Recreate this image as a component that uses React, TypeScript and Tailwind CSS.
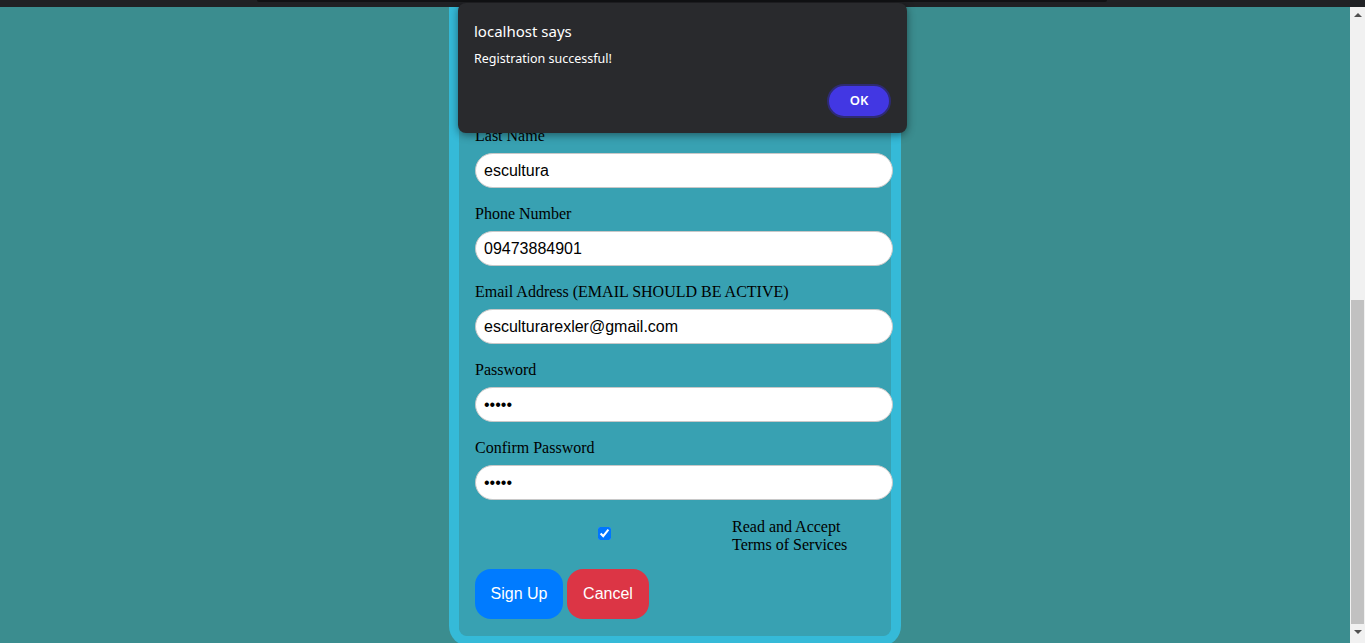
import { useState } from "react";

const fields = [
  { label: "Last Name", value: "escultura", type: "text" },
  { label: "Phone Number", value: "09473884901", type: "text" },
  { label: "Email Address (EMAIL SHOULD BE ACTIVE)", value: "esculturarexler@gmail.com", type: "text" },
  { label: "Password", value: "12345", type: "password" },
  { label: "Confirm Password", value: "12345", type: "password" },
];

export default function App() {
  const [accepted, setAccepted] = useState(true);

  return (
    <div className="relative flex h-[643px] w-full flex-col overflow-hidden bg-[#3b8d8f]">
      {/* browser strip */}
      <div className="h-[7px] shrink-0 bg-[#202124]">
        <div className="mx-auto h-[2px] w-[850px] translate-x-[-1px] rounded-b bg-[#111214]" />
      </div>

      <div className="flex min-h-0 flex-1">
        {/* page */}
        <div className="min-w-0 flex-1 overflow-hidden">
          <div className="mx-auto w-[452px] rounded-b-[20px] border-x-[10px] border-b-[10px] border-[#35bad8]">
            <div className="rounded-b-lg bg-[#38a1b2] px-4 pt-[119px] pb-[17px] font-['Liberation_Serif',serif] text-base text-black">
              {fields.map((f) => (
                <div key={f.label} className="mb-4">
                  <label className="block leading-5">{f.label}</label>
                  <input
                    type={f.type}
                    defaultValue={f.value}
                    className="mt-[7px] block h-[35px] w-[418px] rounded-full border border-[#c8c8c8] bg-white px-2 font-['Liberation_Sans',Arial,sans-serif] text-base text-black outline-none"
                  />
                </div>
              ))}

              <div className="flex items-start pl-[123px] pt-[2px]">
                <input
                  type="checkbox"
                  checked={accepted}
                  onChange={(e) => setAccepted(e.target.checked)}
                  className="m-0 mt-[9px] h-[13px] w-[13px] accent-[#0075ff]"
                />
                <div className="ml-[121px] leading-[18px]">
                  Read and Accept
                  <br />
                  Terms of Services
                </div>
              </div>

              <div className="mt-[15px] flex gap-1 font-['Liberation_Sans',Arial,sans-serif]">
                <button className="h-[50px] w-[88px] rounded-2xl bg-[#007bff] text-base text-white">Sign Up</button>
                <button className="h-[50px] w-[82px] rounded-2xl bg-[#dc3545] text-base text-white">Cancel</button>
              </div>
            </div>
          </div>
        </div>

        {/* scrollbar */}
        <div className="flex w-[15px] shrink-0 flex-col items-center bg-[#f1f1f1]">
          <div className="mt-[6px] h-0 w-0 border-x-[4px] border-b-[4px] border-x-transparent border-b-[#505050]" />
          <div className="mt-[283px] h-[324px] w-[13px] bg-[#c1c1c1]" />
          <div className="mt-[6px] h-0 w-0 border-x-[4px] border-t-[4px] border-x-transparent border-t-[#505050]" />
        </div>
      </div>

      {/* alert dialog */}
      <div className="absolute left-[458px] top-[3px] h-[130px] w-[449px] rounded-lg bg-[#292a2d] px-4 pt-[19px] font-['Noto_Sans','Open_Sans',sans-serif] text-white shadow-[0_2px_8px_rgba(0,0,0,0.45)]">
        <div className="text-[15px] leading-[18px]">localhost says</div>
        <div className="mt-[10px] text-[12.5px] leading-[18px]">Registration successful!</div>
        <div className="mt-[16px] flex justify-end">
          <button className="flex h-[34px] w-[64px] items-center justify-center rounded-full border-2 border-[#2e2b73] bg-[#4237e3] text-[13px] font-semibold text-white">
            OK
          </button>
        </div>
      </div>
    </div>
  );
}
